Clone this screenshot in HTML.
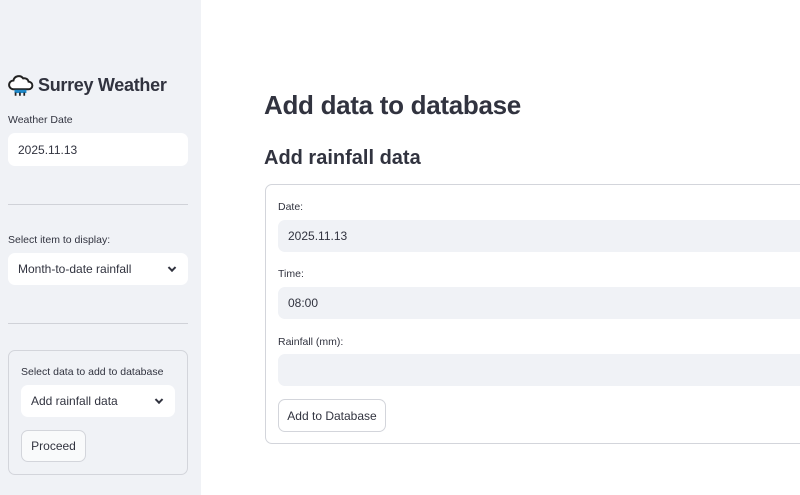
<!DOCTYPE html>
<html><head><style>
*{box-sizing:border-box;margin:0;padding:0}
body{width:800px;height:495px;overflow:hidden;font-family:"Liberation Sans",sans-serif;color:#31333f;background:#fff;position:relative}
.sb{position:absolute;left:0;top:0;width:201px;height:495px;background:#f0f2f6}
.abs{position:absolute}
.lbl{font-size:10.5px;color:#31333f}
.inp{position:absolute;border-radius:7px;font-size:12px;padding-left:10px;display:flex;align-items:center}
.hr{position:absolute;left:8px;width:180px;height:1px;background:#d0d2d8}
.btn{position:absolute;border:1px solid #d3d5db;border-radius:7px;font-size:12px;display:flex;align-items:center;justify-content:center;background:#fff}
.chev{position:absolute;right:13px;top:50%;width:6px;height:6px;border-right:2px solid #31333f;border-bottom:2px solid #31333f;transform:translateY(-70%) rotate(45deg)}
</style></head><body>
<div class="sb">
<svg class="abs" style="left:8px;top:75px" width="26" height="22" viewBox="0 0 24 20"><path d="M5 13a4 4 0 0 1 0-8 5 5 0 0 1 9-2 4 4 0 0 1 5 3 3.5 3.5 0 0 1 0 7z" fill="#fff" stroke="#222" stroke-width="1.8"/><rect x="6" y="13.5" width="11" height="3" fill="#1e88c8"/><path d="M7 16v3M11 16v3M15 16v3" stroke="#222" stroke-width="1.6"/></svg>
<div class="abs" style="left:38px;top:75px;font-size:18px;font-weight:bold;letter-spacing:-0.3px">Surrey Weather</div>
<div class="abs lbl" style="left:8px;top:114px">Weather Date</div>
<div class="inp" style="left:8px;top:133px;width:180px;height:33px;background:#fff">2025.11.13</div>
<div class="hr" style="top:204px"></div>
<div class="abs lbl" style="left:8px;top:234px">Select item to display:</div>
<div class="inp" style="left:8px;top:253px;width:180px;height:32px;background:#fff">Month-to-date rainfall<span class="chev"></span></div>
<div class="hr" style="top:323px"></div>
<div class="abs" style="left:8px;top:350px;width:180px;height:125px;border:1px solid #d3d5db;border-radius:7px"></div>
<div class="abs lbl" style="left:21px;top:366px">Select data to add to database</div>
<div class="inp" style="left:21px;top:385px;width:154px;height:32px;background:#fff">Add rainfall data<span class="chev"></span></div>
<div class="btn" style="left:21px;top:430px;width:65px;height:32px;background:#f9fafb">Proceed</div>
</div>
<div class="abs" style="left:264px;top:90px;font-size:26px;font-weight:bold;letter-spacing:-0.3px">Add data to database</div>
<div class="abs" style="left:264px;top:147px;font-size:20px;font-weight:bold">Add rainfall data</div>
<div class="abs" style="left:265px;top:184px;width:560px;height:260px;border:1px solid #d3d5db;border-radius:7px"></div>
<div class="abs lbl" style="left:278px;top:201px">Date:</div>
<div class="inp" style="left:278px;top:220px;width:540px;height:32px;background:#f0f2f6">2025.11.13</div>
<div class="abs lbl" style="left:278px;top:268px">Time:</div>
<div class="inp" style="left:278px;top:287px;width:540px;height:32px;background:#f0f2f6">08:00</div>
<div class="abs lbl" style="left:278px;top:336px">Rainfall (mm):</div>
<div class="inp" style="left:278px;top:354px;width:540px;height:32px;background:#f0f2f6"></div>
<div class="btn" style="left:278px;top:399px;width:108px;height:33px">Add to Database</div>
</body></html>
